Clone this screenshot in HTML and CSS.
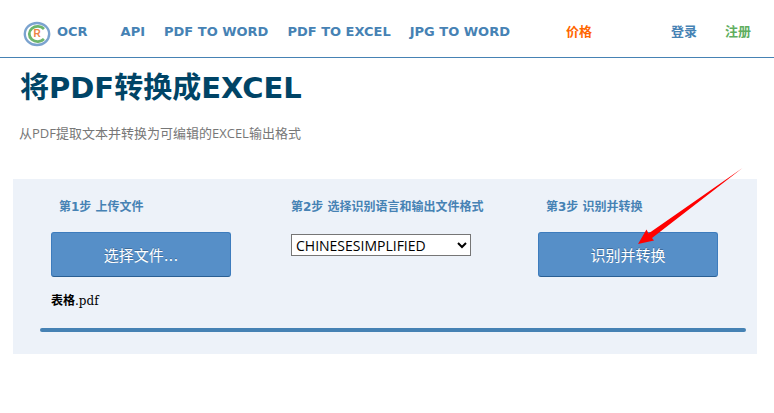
FILE: index.html
```
<!DOCTYPE html>
<html lang="zh-CN">
<head>
    <meta charset="UTF-8">
    <meta name="viewport" content="width=device-width, initial-scale=1.0">
    <title>OCR - PDF to Excel</title>
    <link rel="stylesheet" href="styles.css">
</head>
<body>

    <header class="header">
        <a class="brand" href="#">
            <svg class="logo" width="28" height="26" viewBox="0 0 28 26" aria-hidden="true">
                <ellipse cx="14" cy="13" rx="12.2" ry="11" fill="#fff" stroke="#7ba3cf" stroke-width="2.4"/>
                <path d="M21 8 A8.4 7.6 0 1 0 21 18" fill="none" stroke="#6db56d" stroke-width="2.8"/>
                <text class="logo-letter" x="14" y="16" text-anchor="middle">R</text>
            </svg>
            <span>OCR</span>
        </a>
        <nav class="nav">
            <a href="#">API</a>
            <a href="#">PDF TO WORD</a>
            <a href="#">PDF TO EXCEL</a>
            <a href="#">JPG TO WORD</a>
        </nav>
        <a class="price" href="#">价格</a>
        <div class="account">
            <a href="#">登录</a>
            <a class="register" href="#">注册</a>
        </div>
    </header>

    <main class="main">
        <h1 class="title">将PDF转换成EXCEL</h1>
        <p class="subtitle">从PDF提取文本并转换为可编辑的EXCEL输出格式</p>

        <form class="panel">
            <div class="steps">
                <div class="step">
                    <h2 class="step-title indent">第1步 上传文件</h2>
                    <button class="button" type="button">选择文件...</button>
                    <p class="file-name"><strong>表格</strong>.pdf</p>
                </div>
                <div class="step">
                    <label class="step-title" for="language">第2步 选择识别语言和输出文件格式</label>
                    <select class="language" id="language">
                        <option>CHINESESIMPLIFIED</option>
                    </select>
                </div>
                <div class="step">
                    <h2 class="step-title indent">第3步 识别并转换</h2>
                    <button class="button" type="button">识别并转换</button>
                    <svg class="arrow" width="106" height="78" viewBox="0 0 106 78" aria-hidden="true">
                        <path d="M0 77 L8.5 62.5 L10.5 66.5 L104.5 1 L14 71 L16 73.5 Z" fill="#ff0000"/>
                    </svg>
                </div>
            </div>
            <div class="progress"></div>
        </form>
    </main>

</body>
</html>
```

FILE: styles.css
```
body {
    margin: 0;
    background-color: #fff;
    color: #000;
    font-family: "DejaVu Sans", "Noto Sans CJK SC", sans-serif;
    font-size: 13px;
}

a {
    color: #4682b4;
    text-decoration: none;
}

/* Header */
.header {
    display: flex;
    align-items: center;
    padding: 16px 23px 9px;
    border-bottom: 1px solid #4682b4;
    font-weight: bold;
    line-height: 32px;
    white-space: nowrap;
}

.brand {
    display: flex;
    align-items: center;
    gap: 6px;
}

.logo {
    margin-top: 3px;
}

.logo-letter {
    fill: #ed8345;
    font: bold 10px "Liberation Sans", sans-serif;
}

.nav {
    display: flex;
    gap: 19px;
    margin-left: 33px;
}

.price {
    margin-left: auto;
    color: #ff6600;
}

.account {
    display: flex;
    gap: 28px;
    margin-left: 79px;
}

.register {
    color: #5fae5f;
}

/* Content */
.main {
    padding: 8px 17px 24px 13px;
}

.title {
    margin: 0 7px;
    color: #004466;
    font-size: 29px;
    line-height: 44px;
}

.subtitle {
    margin: 11px 6px 0;
    color: #777;
    font-family: "Open Sans", "Noto Sans CJK SC", sans-serif;
    line-height: 24px;
}

.panel {
    margin-top: 34px;
    padding: 16px 11px 22px 27px;
    background-color: #edf2f9;
}

.steps {
    display: grid;
    grid-template-columns: 240fr 247fr 180fr;
    padding: 0 28px 0 11px;
}

.step {
    position: relative;
}

.step-title {
    display: block;
    margin: 0 0 13px;
    color: #4682b4;
    font-size: 12px;
    font-weight: bold;
    line-height: 24px;
}

.indent {
    padding-left: 8px;
}

.button {
    display: block;
    width: 180px;
    height: 45px;
    padding: 0;
    border: 1px solid #3d7cbd;
    border-bottom-color: #2a5f93;
    border-radius: 3px;
    background-color: #568fc8;
    color: #fff;
    font-family: "DejaVu Sans", "Noto Sans CJK SC", sans-serif;
    font-size: 15px;
    text-shadow: 0 -1px 0 rgba(0, 0, 0, 0.25);
    cursor: pointer;
}

.language {
    display: block;
    width: 180px;
    height: 22px;
    margin-top: 15px;
    padding: 0;
    border: 1px solid #767676;
    border-radius: 0;
    background-color: #fff;
    color: #000;
    font-family: "Open Sans", sans-serif;
    font-size: 14px;
}

.file-name {
    margin: 12px 0 0;
    font-family: "DejaVu Serif", "Noto Sans CJK SC", serif;
    font-size: 12px;
    line-height: 24px;
}

.progress {
    height: 4px;
    margin-top: 15px;
    border-radius: 2px;
    background-color: #4682b4;
}

/* Pointer over the convert button */
.arrow {
    position: absolute;
    left: 100px;
    top: -28px;
    pointer-events: none;
}
```
